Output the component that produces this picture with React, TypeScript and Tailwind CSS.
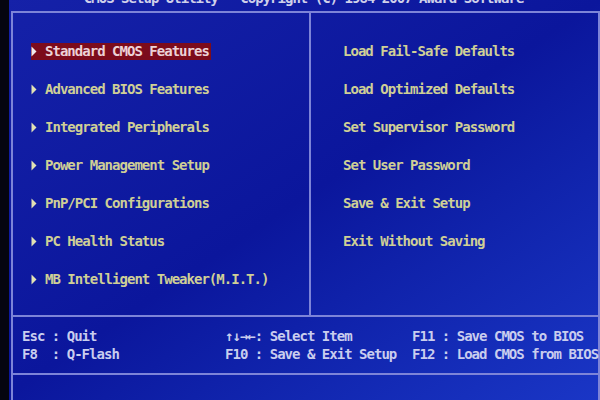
import React from "react";

const leftItems = [
  "Standard CMOS Features",
  "Advanced BIOS Features",
  "Integrated Peripherals",
  "Power Management Setup",
  "PnP/PCI Configurations",
  "PC Health Status",
  "MB Intelligent Tweaker(M.I.T.)",
];

const rightItems = [
  "Load Fail-Safe Defaults",
  "Load Optimized Defaults",
  "Set Supervisor Password",
  "Set User Password",
  "Save & Exit Setup",
  "Exit Without Saving",
];

function Arrow({ color }: { color: string }) {
  return (
    <svg width="14" height="17" viewBox="0 0 14 17" className="shrink-0">
      <polygon points="0.5,3.5 5.5,8.5 0.5,13.5" fill={color} />
    </svg>
  );
}

export default function App() {
  const font = "font-['DejaVu_Sans_Mono',monospace] font-bold text-[14px] tracking-[-0.98px] whitespace-pre";
  return (
    <div className={`w-[600px] h-[400px] flex overflow-hidden bg-linear-to-br from-[#1521a8] via-[#0b169c] to-[#1a36c6] ${font}`}>
      <div className="w-[9px] h-full bg-[#050510] shrink-0" />
      <div className="flex-1 flex flex-col">
        <div className="h-[11px] relative overflow-hidden">
          <div className="absolute left-0 right-0 -top-[10px] text-center text-[#cfd0ea] leading-[16px] pr-[4px]">
            CMOS Setup Utility - Copyright (C) 1984-2007 Award Software
          </div>
        </div>
        <div className="ml-[2px] mr-[2px] flex-1 border-l-2 border-t-2 border-r-2 border-[#7d84d8] flex flex-col">
          <div className="h-[304px] flex border-b-2 border-[#7d84d8]">
            <div className="w-[298px] border-r-2 border-[#7d84d8] pt-[19px] pl-[18px]">
              {leftItems.map((t, i) => (
                <div key={t} className="h-[38px] flex items-center">
                  <div
                    className={`flex items-center h-[17px] pr-[2px] ${
                      i === 0 ? "bg-[#7c0c1c] text-[#ecd2d6]" : "text-[#cfcf96]"
                    }`}
                  >
                    <Arrow color={i === 0 ? "#f2ecec" : "#e2e2b4"} />
                    <span className="leading-[17px]">{t}</span>
                  </div>
                </div>
              ))}
            </div>
            <div className="flex-1 pt-[19px] pl-[32px] text-[#cfcf96]">
              {rightItems.map((t) => (
                <div key={t} className="h-[38px] flex items-center">
                  <span className="leading-[17px]">{t}</span>
                </div>
              ))}
            </div>
          </div>
          <div className="h-[58px] border-b-2 border-[#7d84d8] pt-[10px] pl-[9px] flex text-[#c9cdee] leading-[18px]">
            <div className="w-[203px] flex flex-col">
              <span>Esc : Quit</span>
              <span>F8  : Q-Flash</span>
            </div>
            <div className="w-[187px] flex flex-col">
              <span>↑↓→←: Select Item</span>
              <span>F10 : Save &amp; Exit Setup</span>
            </div>
            <div className="flex-1 flex flex-col">
              <span>F11 : Save CMOS to BIOS</span>
              <span>F12 : Load CMOS from BIOS</span>
            </div>
          </div>
          <div className="flex-1" />
        </div>
      </div>
    </div>
  );
}
